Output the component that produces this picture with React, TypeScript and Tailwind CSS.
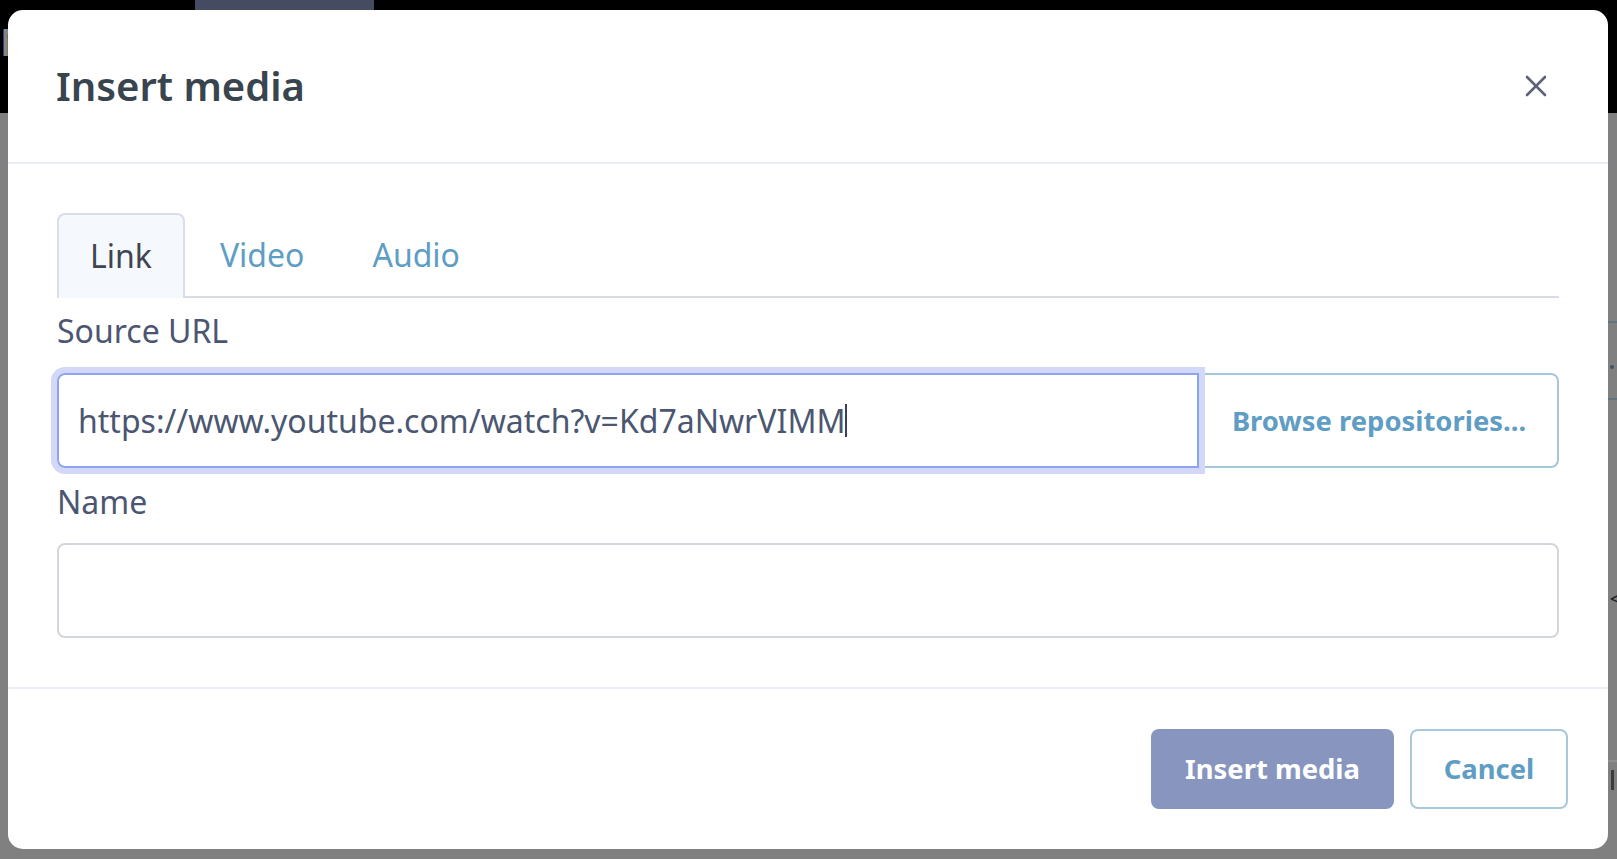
import React from "react";

const font = { fontFamily: '"Noto Sans", "Open Sans", sans-serif' };

const CloseIcon: React.FC = () => (
  <svg width="22" height="22" viewBox="0 0 22 22" fill="none">
    <path d="M2 2L20 20M20 2L2 20" stroke="#5c6379" strokeWidth="2.6" strokeLinecap="round" />
  </svg>
);

const Tabs: React.FC = () => (
  <div className="flex h-[85px] border-b-2 border-[#d6dcea]">
    <div className="-mb-[2px] flex items-center rounded-t-[8px] border-2 border-b-0 border-[#d8deea] bg-[#f5f8fd] px-[31px] pb-[2px] text-[32px] text-[#3e4450]">
      Link
    </div>
    <div className="flex items-center border-2 border-transparent pr-[31px] pl-[33px] text-[32px] text-[#5e9ec4]">
      Video
    </div>
    <div className="flex items-center border-2 border-transparent px-[33px] text-[32px] text-[#5e9ec4]">
      Audio
    </div>
  </div>
);

export default function App() {
  return (
    <div className="relative h-[859px] w-[1617px] overflow-hidden bg-[#808080]" style={font}>
      {/* page behind the overlay */}
      <div className="flex h-[113px] bg-black">
        <div className="pt-[22px] text-[38px] font-semibold leading-none text-[#858585]">M</div>
        <div className="ml-[160px] h-[10px] w-[179px] bg-[#454b60]" />
      </div>
      <div className="flex justify-end">
        <div className="flex w-[9px] flex-col">
          <div className="mt-[208px] h-[2px] bg-[#5f7584]" />
          <div className="mt-[42px] ml-[2px] h-[4px] w-[4px] rounded-full bg-[#3d5566]" />
          <div className="mt-[29px] h-[2px] bg-[#5f7584]" />
          <div className="mt-[192px] ml-[2px] text-[14px] font-bold leading-none text-[#222]">&lt;</div>
          <div className="mt-[154px] h-[2px] bg-[#8e8e8e]" />
          <div className="mt-[8px] ml-[3px] h-[20px] w-[3px] bg-[#3a3a3a]" />
        </div>
      </div>

      {/* modal */}
      <div className="absolute top-[10px] left-[8px] flex h-[839px] w-[1600px] flex-col rounded-[15px] bg-white">
        <div className="flex h-[154px] items-center justify-between border-b-2 border-[#e9eef5] pr-[61px] pl-[48px]">
          <h1 className="text-[40px] font-semibold text-[#38444e]">Insert media</h1>
          <button className="flex items-center">
            <CloseIcon />
          </button>
        </div>

        <div className="flex flex-col px-[49px] pt-[49px] pb-[49px]">
          <Tabs />

          <label className="mt-[9px] mb-[18px] text-[32px] leading-[48px] text-[#4c5672]">Source URL</label>
          <div className="flex h-[95px]">
            <div className="relative z-10 flex flex-1 items-center rounded-l-[8px] border-2 border-[#8fa4ee] pl-[19px] text-[32px] text-[#4b5671] shadow-[0_0_0_6px_#d3d8f9]">
              https://www.youtube.com/watch?v=Kd7aNwrVIMM
              <span className="h-[33px] w-[2px] bg-[#3b4256]" />
            </div>
            <button className="flex w-[360px] items-center justify-center rounded-r-[8px] border-2 border-[#a6c7da] text-[27.4px] font-bold text-[#5f9dc4]">
              Browse repositories...
            </button>
          </div>

          <label className="mt-[10px] mb-[17px] text-[32px] leading-[48px] text-[#4c5672]">Name</label>
          <div className="h-[95px] rounded-[8px] border-2 border-[#d3d6dc]" />
        </div>

        <div className="flex flex-1 items-center justify-end gap-[16px] border-t-2 border-[#e9eef5] pr-[40px]">
          <button className="flex h-[80px] w-[243px] items-center justify-center rounded-[8px] bg-[#8896bf] text-[27.4px] font-bold text-white">
            Insert media
          </button>
          <button className="flex h-[80px] w-[158px] items-center justify-center rounded-[8px] border-2 border-[#a7c9db] text-[27.4px] font-bold text-[#5f9dc4]">
            Cancel
          </button>
        </div>
      </div>
    </div>
  );
}
